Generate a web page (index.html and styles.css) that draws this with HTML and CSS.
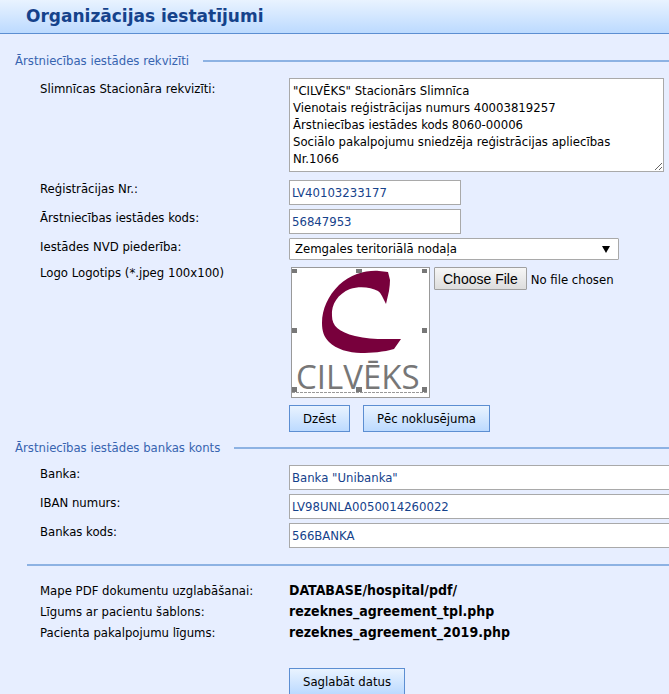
FILE: index.html
```html
<!DOCTYPE html>
<html lang="lv">
<head>
    <meta charset="UTF-8">
    <meta name="viewport" content="width=device-width, initial-scale=1.0">
    <title>Organizācijas iestatījumi</title>
    <link rel="stylesheet" href="styles.css">
</head>
<body>
    <header class="page-header">
        <h1>Organizācijas iestatījumi</h1>
    </header>
    <form class="settings">
        <section>
            <h2 class="section-title">Ārstniecības iestādes rekvizīti</h2>
            <div class="row row-details">
                <label for="details">Slimnīcas Stacionāra rekvizīti:</label>
                <textarea id="details" name="details" spellcheck="false">"CILVĒKS" Stacionārs Slimnīca
Vienotais reģistrācijas numurs 40003819257
Ārstniecības iestādes kods 8060-00006
Sociālo pakalpojumu sniedzēja reģistrācijas apliecības
Nr.1066</textarea>
            </div>
            <div class="row">
                <label for="reg_nr">Reģistrācijas Nr.:</label>
                <input class="short" type="text" id="reg_nr" name="reg_nr" value="LV40103233177">
            </div>
            <div class="row">
                <label for="code">Ārstniecības iestādes kods:</label>
                <input class="short" type="text" id="code" name="code" value="56847953">
            </div>
            <div class="row">
                <label for="nvd">Iestādes NVD piederība:</label>
                <div class="select">
                    <select id="nvd" name="nvd">
                        <option>Zemgales teritoriālā nodaļa</option>
                    </select>
                </div>
            </div>
            <div class="row row-logo">
                <label for="logo">Logo Logotips (*.jpeg 100x100)</label>
                <div>
                    <div class="logo-line">
                        <svg class="logo" viewBox="0 0 139 131" role="img" aria-label="CILVĒKS">
                            <rect x="0.5" y="0.5" width="138" height="130" fill="#fff" stroke="#999"/>
                            <path fill="#78003c" d="M97 5L99 13Q99 17 98 24L95 37L91 29Q89 25 87 24C80 20 68 19 59 22C47 27 40 37 41 49C41 59 48 65 64 69C79 73 94 72 110 72L103 82C93 85 80 86 70 86C58 86 45 82 38 75C33 70 31 64 31 56C31 42 37 29 48 18C60 7 76 3 88 4Z"/>
                            <text class="logo-text" x="5" y="122">CILVĒKS</text>
                            <path stroke="#999" stroke-dasharray="3 1" d="M1 125.5H137"/>
                            <path fill="#777" d="M1 2h5v4h-5zM65 2h6v4h-6zM131 2h5v4h-5zM1 61h5v5h-5zM131 61h5v5h-5zM1 120h5v5h-5zM65 120h6v5h-6zM131 120h5v5h-5z"/>
                        </svg>
                        <input type="file" id="logo" name="logo" accept="image/jpeg">
                    </div>
                    <div class="buttons">
                        <button type="button">Dzēst</button>
                        <button type="button">Pēc noklusējuma</button>
                    </div>
                </div>
            </div>
        </section>

        <section>
            <h2 class="section-title">Ārstniecības iestādes bankas konts</h2>
            <div class="row">
                <label for="bank">Banka:</label>
                <input class="wide" type="text" id="bank" name="bank" value="Banka &quot;Unibanka&quot;">
            </div>
            <div class="row">
                <label for="iban">IBAN numurs:</label>
                <input class="wide" type="text" id="iban" name="iban" value="LV98UNLA0050014260022">
            </div>
            <div class="row">
                <label for="bank_code">Bankas kods:</label>
                <input class="wide" type="text" id="bank_code" name="bank_code" value="566BANKA">
            </div>
        </section>

        <hr>

        <dl class="files">
            <dt>Mape PDF dokumentu uzglabāšanai:</dt>
            <dd>DATABASE/hospital/pdf/</dd>
            <dt>Līgums ar pacientu šablons:</dt>
            <dd>rezeknes_agreement_tpl.php</dd>
            <dt>Pacienta pakalpojumu līgums:</dt>
            <dd>rezeknes_agreement_2019.php</dd>
        </dl>
        <div class="save">
            <button type="submit">Saglabāt datus</button>
        </div>
    </form>
</body>
</html>
```
FILE: styles.css
```css
* {
    box-sizing: border-box;
}
body {
    margin: 0;
    background-color: #e7eeff;
    color: #000;
    font-family: Tahoma, "DejaVu Sans Condensed", sans-serif;
    font-size: 13px;
    line-height: 18px;
}
input, textarea, select, button {
    font: inherit;
    margin: 0;
}
.page-header {
    height: 34px;
    padding: 0 26px;
    border-bottom: 1px solid #5c8ed2;
    background: linear-gradient(#e9f3ff, #bcdaff);
}
h1 {
    margin: 0;
    color: #15428b;
    font-family: Verdana, "DejaVu Sans", sans-serif;
    font-size: 17px;
    line-height: 33px;
}
.section-title {
    display: flex;
    align-items: center;
    gap: 14px;
    margin: 0 0 8px;
    padding-left: 15px;
    color: #3764b0;
    font-size: 13px;
    font-weight: normal;
    line-height: 18px;
}
.section-title::after {
    content: "";
    flex: 1;
    height: 2px;
    background-color: #8db2e3;
}
.settings {
    height: calc(100vh - 34px);
    min-height: 660px;
    padding-top: 18px;
    overflow: hidden;
}
.row {
    display: grid;
    grid-template-columns: 249px 1fr;
    align-items: start;
    margin-bottom: 4px;
    padding-left: 40px;
}
.row-details {
    margin-bottom: 8px;
    padding-right: 5px;
}
.row-details label {
    padding-top: 2px;
}
textarea {
    display: block;
    width: 100%;
    height: 94px;
    padding: 3px;
    border: 1px solid #a9a9a9;
    line-height: 17px;
    overflow: hidden;
}
.short, .wide {
    height: 25px;
    padding: 1px 2px;
    border: 1px solid #a9a9a9;
    background-color: #fff;
    color: #15428b;
}
.short {
    width: 172px;
}
.wide {
    width: 100%;
    border-right: none;
}
.select {
    position: relative;
    width: 330px;
}
.select::after {
    content: "";
    position: absolute;
    top: 8px;
    right: 9px;
    border: 4px solid transparent;
    border-top: 7px solid #000;
    border-bottom: none;
    pointer-events: none;
}
select {
    display: block;
    appearance: none;
    width: 100%;
    height: 22px;
    padding: 0 5px;
    border: 1px solid #a9a9a9;
    border-radius: 1px;
    background-color: #fff;
    color: #000;
}
.row-logo {
    margin: 7px 0;
}
.row-logo label {
    line-height: 12px;
}
.logo-line {
    display: flex;
    align-items: flex-start;
    gap: 4px;
    padding-left: 2px;
}
.logo {
    flex: none;
    width: 139px;
    height: 131px;
}
.logo-text {
    fill: #777;
    font-family: "Open Sans", sans-serif;
    font-size: 33px;
}
input[type="file"] {
    flex: 1;
    min-width: 0;
}
input[type="file"]::file-selector-button {
    height: 23px;
    margin-right: 4px;
    padding: 0 8px;
    border: 1px solid #a0a0a0;
    border-radius: 1px;
    background: linear-gradient(#f6f6f6, #dddddd);
    font-family: Arial, "Liberation Sans", sans-serif;
    font-size: 14px;
}
.buttons {
    display: flex;
    gap: 13px;
    margin-top: 7px;
}
button {
    height: 27px;
    padding: 0 13px;
    border: 1px solid #5c8ed2;
    background: linear-gradient(#e9f3ff, #bcdaff);
    color: #000;
}
hr {
    height: 2px;
    margin: 16px 0 14px 27px;
    border: none;
    background-color: #8db2e3;
}
.files {
    display: grid;
    grid-template-columns: 249px 1fr;
    margin: 0 0 25px;
    padding-left: 40px;
    line-height: 21px;
}
.files dd {
    margin: 0;
    font-size: 14px;
    font-weight: bold;
}
.save {
    padding-left: 289px;
}
```
